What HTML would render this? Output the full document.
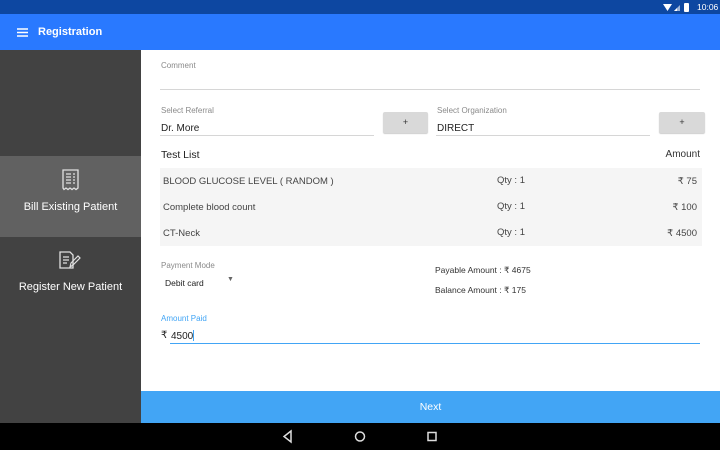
<!DOCTYPE html>
<html><head><meta charset="utf-8"><style>
*{margin:0;padding:0;box-sizing:border-box}
body{width:720px;height:450px;overflow:hidden;font-family:"Liberation Sans",sans-serif;background:#fff;position:relative}
.a{position:absolute}
.lbl{font-size:8px;color:#8a8a8a}
.line{height:1px;background:#d6d6d6}
.btn{background:#d9d9d9;border-radius:2px;font-size:9px;color:#333;text-align:center;line-height:21px;box-shadow:0 1px 1px rgba(0,0,0,.2)}
.row{left:160px;width:542px;height:26px;background:#f5f5f5;font-size:9.5px;color:#444}
.row span{position:absolute;top:8px}
</style></head><body>
<div class="a" style="left:0;top:0;width:720px;height:14px;background:#0d47a1"></div>
<div class="a" style="left:697px;top:2px;font-size:8.5px;color:#fff">10:06</div>
<svg class="a" style="left:663px;top:3px" width="30" height="9"><path d="M0 1 L9 1 L4.5 8Z" fill="#fff"/><path d="M11 8 L17 2 L17 8Z" fill="#fff" opacity=".6"/><path d="M11 8 L14 5 L14 8Z" fill="#fff"/><rect x="21" y="0" width="5" height="9" rx="1" fill="#fff"/></svg>
<div class="a" style="left:0;top:14px;width:720px;height:36px;background:#2979ff"></div>
<svg class="a" style="left:17px;top:28px" width="11" height="9"><path d="M0 1H11M0 4.5H11M0 8H11" stroke="#fff" stroke-width="1.4"/></svg>
<div class="a" style="left:38px;top:26px;font-size:11px;font-weight:bold;color:#fff">Registration</div>
<div class="a" style="left:0;top:50px;width:141px;height:373px;background:#424242"></div>
<div class="a" style="left:0;top:156px;width:141px;height:81px;background:#616161"></div>
<svg class="a" style="left:61px;top:169px" width="19" height="22"><path d="M2 1H17V19L15 20.5L13 19L11 20.5L9 19L7 20.5L5 19L3 20.5L2 19Z" fill="none" stroke="#e0e0e0" stroke-width="1.3"/><path d="M5 5H10M5 8H10M5 11H10M5 14H10M12 5H14M12 8H14M12 11H14M12 14H14" stroke="#e0e0e0" stroke-width="1.3"/></svg>
<div class="a" style="left:0;top:201px;width:141px;text-align:center;font-size:11px;color:#fff">Bill Existing Patient</div>
<svg class="a" style="left:59px;top:251px" width="22" height="19"><path d="M1 1H11L14 4V17H1Z" fill="none" stroke="#e0e0e0" stroke-width="1.3"/><path d="M4 6H10M4 9H10M4 12H8" stroke="#e0e0e0" stroke-width="1.3"/><path d="M11 16L12 12L19 5L21 7L14 14Z" fill="none" stroke="#e0e0e0" stroke-width="1.2"/></svg>
<div class="a" style="left:0;top:281px;width:141px;text-align:center;font-size:11px;color:#fff">Register New Patient</div>

<div class="a lbl" style="left:161px;top:61px">Comment</div>
<div class="a line" style="left:160px;top:89px;width:540px"></div>
<div class="a lbl" style="left:161px;top:106px">Select Referral</div>
<div class="a" style="left:161px;top:123px;font-size:10px;color:#222">Dr. More</div>
<div class="a line" style="left:160px;top:135px;width:214px"></div>
<div class="a btn" style="left:383px;top:112px;width:45px;height:21px">+</div>
<div class="a lbl" style="left:437px;top:106px">Select Organization</div>
<div class="a" style="left:437px;top:123px;font-size:10px;color:#222">DIRECT</div>
<div class="a line" style="left:436px;top:135px;width:214px"></div>
<div class="a btn" style="left:659px;top:112px;width:46px;height:21px">+</div>
<div class="a" style="left:161px;top:149px;font-size:10.5px;color:#222">Test List</div>
<div class="a" style="right:20px;top:149px;font-size:10px;color:#333">Amount</div>
<div class="a row" style="top:168px;height:26px"><span style="left:3px">BLOOD GLUCOSE LEVEL ( RANDOM )</span><span style="left:337px;top:7px">Qty : 1</span><span style="right:5px">₹ 75</span></div>
<div class="a row" style="top:194px;height:26px"><span style="left:3px">Complete blood count</span><span style="left:337px;top:7px">Qty : 1</span><span style="right:5px">₹ 100</span></div>
<div class="a row" style="top:220px;height:26px"><span style="left:3px">CT-Neck</span><span style="left:337px;top:7px">Qty : 1</span><span style="right:5px">₹ 4500</span></div>
<div class="a lbl" style="left:161px;top:261px">Payment Mode</div>
<div class="a" style="left:165px;top:278px;font-size:8.5px;color:#222">Debit card</div>
<div class="a" style="left:227px;top:276px;font-size:7px;color:#666">▼</div>
<div class="a" style="left:435px;top:265px;font-size:8.5px;color:#333">Payable Amount : ₹ 4675</div>
<div class="a" style="left:435px;top:285px;font-size:8.5px;color:#333">Balance Amount : ₹ 175</div>
<div class="a" style="left:161px;top:314px;font-size:8px;color:#42a5f5">Amount Paid</div>
<div class="a" style="left:161px;top:330px;font-size:10px;color:#222">₹</div>
<div class="a" style="left:171px;top:330px;font-size:10px;color:#222">4500<span style="display:inline-block;width:1px;height:11px;background:#42a5f5;vertical-align:-2px"></span></div>
<div class="a" style="left:170px;top:343px;width:530px;height:1px;background:#42a5f5"></div>

<div class="a" style="left:141px;top:391px;width:579px;height:32px;background:#42a5f5;color:#fff;font-size:10.5px;text-align:center;line-height:32px">Next</div>
<div class="a" style="left:0;top:423px;width:720px;height:27px;background:#000"></div>
<svg class="a" style="left:280px;top:429px" width="160" height="15"><path d="M11 2L4 7.5L11 13Z" fill="none" stroke="#ddd" stroke-width="1.5"/><circle cx="80" cy="7.5" r="4.5" fill="none" stroke="#ddd" stroke-width="1.5"/><rect x="148" y="3.5" width="8" height="8" fill="none" stroke="#ddd" stroke-width="1.5"/></svg>
</body></html>
